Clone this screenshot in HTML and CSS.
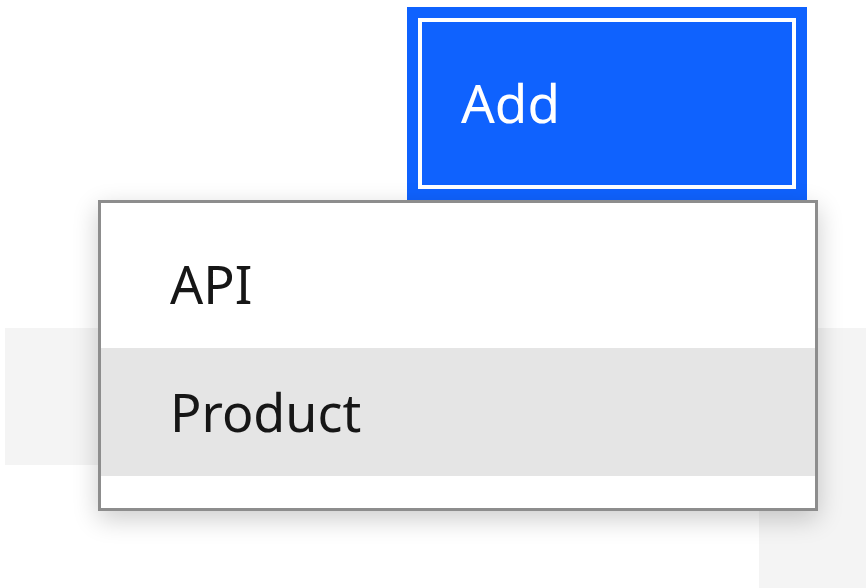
FILE: index.html
```html
<!DOCTYPE html>
<html lang="en">
<head>
<meta charset="utf-8">
<title>Add menu</title>
<link rel="stylesheet" href="styles.css">
</head>
<body>
  <div class="page">
    <div class="toolbar">
      <button class="btn-primary" type="button">Add</button>
    </div>

    <div class="table">
      <div class="table-main">
        <div class="table-row"></div>
      </div>
      <div class="table-side"></div>
    </div>

    <ul class="menu" role="menu">
      <li class="menu-item" role="menuitem">API</li>
      <li class="menu-item is-hover" role="menuitem">Product</li>
    </ul>
  </div>
</body>
</html>
```

FILE: styles.css
```css
* {
  box-sizing: border-box;
}

html, body {
  margin: 0;
  padding: 0;
  background: #ffffff;
}

body {
  font-family: "Noto Sans", "Open Sans", sans-serif;
  color: #161616;
  width: 866px;
  height: 588px;
  overflow: hidden;
}

.page {
  position: relative;
  height: 588px;
}

/* top action bar with the primary button */
.toolbar {
  display: flex;
  padding: 7px 0 0 407px;
  height: 200px;
}

.btn-primary {
  width: 400px;
  height: 193px;
  margin: 0;
  border: 0;
  background: #0f62fe;
  box-shadow: inset 0 0 0 11px #0f62fe, inset 0 0 0 15px #ffffff;
  color: #ffffff;
  font-family: inherit;
  font-size: 53px;
  font-weight: 400;
  text-align: left;
  padding: 0 0 3px 54px;
  cursor: pointer;
}

/* data table underneath */
.table {
  display: grid;
  grid-template-columns: 1fr 107px;
  margin-top: 128px;
  padding-left: 5px;
  height: 260px;
}

.table-row {
  height: 137px;
  background: #f4f4f4;
}

.table-side {
  background: #f4f4f4;
}

/* overflow menu opened from the button */
.menu {
  position: absolute;
  top: 200px;
  left: 98px;
  width: 720px;
  margin: 0;
  padding: 17px 0 32px;
  list-style: none;
  background: #ffffff;
  border: 3px solid #8d8d8d;
  box-shadow: 0 8px 24px rgba(0, 0, 0, 0.2);
}

.menu-item {
  display: flex;
  align-items: center;
  height: 128px;
  padding-left: 69px;
  font-size: 52px;
  line-height: 1;
}

.menu-item.is-hover {
  background: #e5e5e5;
}
```
